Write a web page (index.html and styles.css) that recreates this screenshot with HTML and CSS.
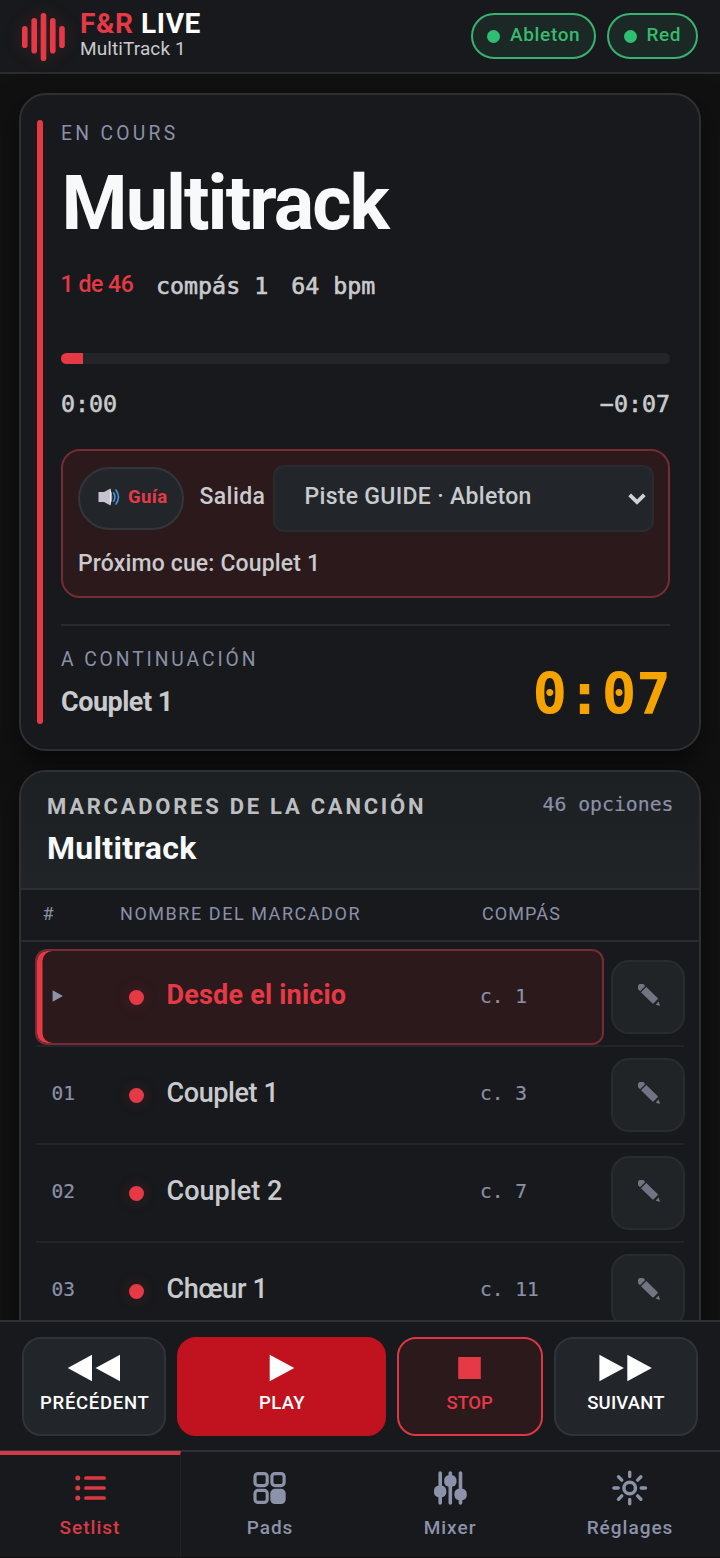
FILE: index.html
```html
<!DOCTYPE html>
<html lang="es">
<head>
<meta charset="utf-8">
<title>F&amp;R LIVE</title>
<link rel="stylesheet" href="styles.css">
</head>
<body>
<svg class="defs" width="0" height="0" aria-hidden="true">
  <symbol id="pencil" viewBox="0 0 22 22">
    <path d="M.8 6 A3.6 3.6 0 0 1 6 .7 L7.2 2 L2.1 7.2Z"/>
    <path d="M3 8.2 L8.3 2.9 L19.6 14 Q20.2 14.7 19.6 15.3 L15.6 19.2 Q15 19.8 14.3 19.2Z"/>
    <path d="M20.6 17.6 L21.9 20.9 Q22 21.9 21 21.7 L17.6 20.6Z"/>
  </symbol>
</svg>
<div class="app">
  <header class="topbar">
    <svg class="logo" width="44" height="50" viewBox="0 0 44 50">
      <rect x="0" y="14" width="5.6" height="22" rx="2.8"/>
      <rect x="9.4" y="6" width="5.6" height="35.5" rx="2.8"/>
      <rect x="18.7" y="1" width="5.6" height="48" rx="2.8"/>
      <rect x="28" y="6" width="5.6" height="35.5" rx="2.8"/>
      <rect x="37.2" y="14" width="5.6" height="22" rx="2.8"/>
    </svg>
    <div class="brand">
      <div class="brand-name"><span class="red">F&amp;R</span> LIVE</div>
      <div class="brand-sub">MultiTrack 1</div>
    </div>
    <div class="pills">
      <span class="pill pill-ableton"><i class="led"></i><span>Ableton</span></span>
      <span class="pill pill-net"><i class="led"></i><span>Red</span></span>
    </div>
  </header>

  <main class="content">
    <section class="card now">
      <div class="accent"></div>
      <div class="now-body">
        <div class="eyebrow">EN COURS</div>
        <h1 class="title">Multitrack</h1>
        <div class="meta"><span class="position">1 de 46</span><span class="mono">compás 1</span><span class="mono">64 bpm</span></div>
        <div class="progress"><div class="progress-fill"></div></div>
        <div class="times mono"><span>0:00</span><span>−0:07</span></div>
        <div class="guide">
          <div class="guide-row">
            <button class="guide-toggle">
              <svg width="22" height="18" viewBox="0 0 22 18">
                <path d="M.5 4 H6 L12.5 .4 V17.4 L6 14 H.5Z" fill="#c9c3cf"/>
                <path d="M12 .6 Q16 9 12 17.4Z" fill="#f2eff5"/>
                <path d="M13.3 6.2 Q15.6 9 13.3 11.8Z" fill="#8b8592"/>
                <path d="M15.6 4.8 Q18.3 9 15.6 13.2 M18 2 Q23 9 18 16" fill="none" stroke="#4a92dc" stroke-width="1.6" stroke-linecap="round"/>
              </svg>
              <span>Guía</span>
            </button>
            <span class="out-label">Salida</span>
            <div class="select">
              <span>Piste GUIDE · Ableton</span>
              <svg width="18" height="12" viewBox="0 0 18 12"><path d="M1.7 1.8 L9 9 L16.3 1.8" fill="none" stroke="#d0d1d6" stroke-width="3.8"/></svg>
            </div>
          </div>
          <div class="cue">Próximo cue: Couplet 1</div>
        </div>
        <div class="next">
          <div>
            <div class="eyebrow next-label">A CONTINUACIÓN</div>
            <div class="next-name">Couplet 1</div>
          </div>
          <div class="countdown">0:07</div>
        </div>
      </div>
    </section>

    <section class="card markers">
      <div class="markers-head">
        <div>
          <div class="markers-title">MARCADORES DE LA CANCIÓN</div>
          <div class="markers-song">Multitrack</div>
        </div>
        <div class="count">46 opciones</div>
      </div>
      <div class="cols"><span>#</span><span>NOMBRE DEL MARCADOR</span><span class="col-bar">COMPÁS</span></div>
      <div class="rows">
        <div class="row">
          <div class="marker active"><span class="num"><svg width="11" height="12" viewBox="0 0 11 12"><path d="M.6.2 L10.9 6 L.6 11.8Z"/></svg></span><i class="dot"></i><span class="name">Desde el inicio</span><span class="bar">c. 1</span></div>
          <button class="edit"><svg width="22" height="22"><use href="#pencil"/></svg></button>
        </div>
        <div class="row">
          <div class="marker"><span class="num">01</span><i class="dot"></i><span class="name">Couplet 1</span><span class="bar">c. 3</span></div>
          <button class="edit"><svg width="22" height="22"><use href="#pencil"/></svg></button>
        </div>
        <div class="row">
          <div class="marker"><span class="num">02</span><i class="dot"></i><span class="name wide">Couplet 2</span><span class="bar">c. 7</span></div>
          <button class="edit"><svg width="22" height="22"><use href="#pencil"/></svg></button>
        </div>
        <div class="row">
          <div class="marker"><span class="num">03</span><i class="dot"></i><span class="name">Chœur 1</span><span class="bar">c. 11</span></div>
          <button class="edit"><svg width="22" height="22"><use href="#pencil"/></svg></button>
        </div>
      </div>
    </section>
  </main>

  <div class="transport">
    <button class="ctl">
      <svg width="54" height="28" viewBox="0 0 54 28"><path d="M25 .7 V27.3 L.7 14Z M53 .7 V27.3 L28.5 14Z"/></svg>
      <span class="ls-prev">PRÉCÉDENT</span>
    </button>
    <button class="ctl play">
      <svg width="26" height="28" viewBox="0 0 26 28"><path d="M.7 .7 L25.3 14 L.7 27.3Z"/></svg>
      <span class="ls-play">PLAY</span>
    </button>
    <button class="ctl stop">
      <svg width="24" height="28" viewBox="0 0 24 28"><path d="M.2 3 H22.8 V25 H.2Z"/></svg>
      <span class="ls-stop">STOP</span>
    </button>
    <button class="ctl">
      <svg width="54" height="28" viewBox="0 0 54 28"><path d="M.4 .7 L24.9 14 L.4 27.3Z M28.3 .7 L52.8 14 L28.3 27.3Z"/></svg>
      <span class="ls-next">SUIVANT</span>
    </button>
  </div>

  <nav class="tabs">
    <a class="tab on">
      <svg width="36" height="36" viewBox="0 0 36 36" fill="none" stroke="currentColor" stroke-width="3.7" stroke-linecap="round"><path d="M13.9 8 H32.1 M13.9 18 H32.1 M13.9 28 H32.1"/><g fill="currentColor" stroke="none"><circle cx="5.8" cy="8" r="2.5"/><circle cx="5.8" cy="18" r="2.5"/><circle cx="5.8" cy="28" r="2.5"/></g></svg>
      <span>Setlist</span>
    </a>
    <a class="tab">
      <svg width="36" height="36" viewBox="0 0 36 36" fill="none" stroke="currentColor" stroke-width="3.2"><rect x="3" y="3.6" width="12.2" height="12" rx="3"/><rect x="19.9" y="3.6" width="12.2" height="12" rx="3"/><rect x="3" y="20.4" width="12.2" height="12" rx="3"/><rect x="19.9" y="20.4" width="12.2" height="12" rx="3" fill="currentColor"/></svg>
      <span>Pads</span>
    </a>
    <a class="tab">
      <svg width="36" height="36" viewBox="0 0 36 36" fill="currentColor" stroke="currentColor" stroke-width="3.6" stroke-linecap="round"><path d="M8.2 3 V33 M18.3 3 V33 M28.5 3 V33"/><g stroke="none"><rect x="2" y="15.8" width="12.3" height="11.4" rx="4.6"/><rect x="12.2" y="5.3" width="12.3" height="11.4" rx="4.6"/><rect x="22.4" y="18.8" width="12.3" height="11.4" rx="4.6"/></g></svg>
      <span>Mixer</span>
    </a>
    <a class="tab">
      <svg width="36" height="36" viewBox="0 0 36 36" fill="none" stroke="currentColor" stroke-width="3.4" stroke-linecap="round"><circle cx="17.7" cy="18" r="5.8"/><path d="M17.7 2.2 V6.5 M17.7 29.5 V33.8 M1.9 18 H6.2 M29.2 18 H33.5 M6.5 6.8 L9.8 10.1 M25.6 25.9 L28.9 29.2 M6.5 29.2 L9.8 25.9 M25.6 10.1 L28.9 6.8"/></svg>
      <span>Réglages</span>
    </a>
  </nav>
</div>
</body>
</html>
```

FILE: styles.css
```css
* { box-sizing: border-box; }
body {
  margin: 0;
  background: #0e0e0f;
  color: #c9cacd;
  font-family: Roboto, "Liberation Sans", sans-serif;
  font-weight: 500;
}
button { font: inherit; padding: 0; color: inherit; }
svg { display: block; flex: none; }
.defs { position: absolute; }
.red { color: #e63946; }
.mono, .count, .num, .bar, .countdown { font-family: "DejaVu Sans Mono", "Liberation Mono", monospace; font-weight: 400; }
.mono { -webkit-text-stroke: .6px currentColor; }
.count, .num, .bar { -webkit-text-stroke: .2px currentColor; }

.app { width: 720px; height: 1558px; display: flex; flex-direction: column; overflow: hidden; }

/* Top bar */
.topbar {
  flex: none;
  height: 74px;
  display: flex;
  align-items: flex-start;
  padding: 12px 22px 0;
  background: #17191c;
  border-bottom: 2px solid #2b2c2e;
}
.logo { fill: #e63946; filter: drop-shadow(0 0 9px rgba(230, 57, 70, .2)); }
.brand { margin-left: 14px; }
.brand-name { height: 24px; font-size: 28px; line-height: 24px; font-weight: 700; letter-spacing: .6px; color: #fff; }
.brand-sub { height: 24px; font-size: 19px; line-height: 25px; font-weight: 400; letter-spacing: .1px; color: #c9cacd; }
.pills { display: flex; gap: 11px; margin: 1px 0 0 auto; }
.pill {
  height: 46px;
  display: flex;
  align-items: center;
  gap: 10px;
  padding-left: 14.5px;
  border: 2px solid #38b26f;
  border-radius: 23px;
  background: #1b2825;
  color: #37ba6d;
  font-size: 19px;
  line-height: 42px;
}
.pill span { height: 44px; }
.pill-ableton { width: 125.5px; letter-spacing: .65px; }
.pill-net { width: 91px; letter-spacing: .6px; }
.led { width: 13px; height: 13px; border-radius: 50%; background: #2fbf71; }

/* Content */
.content {
  flex: none;
  height: 1246px;
  overflow: hidden;
  padding: 19px 19px 0;
  display: flex;
  flex-direction: column;
  gap: 19px;
  background: #111112;
}
.card {
  flex: none;
  border: 2px solid #2f3033;
  border-radius: 27px;
  background: #17191c;
  box-shadow: 0 12px 30px rgba(0, 0, 0, .5);
}
.now { height: 658px; display: flex; padding: 25px 29px 25px 16px; }
.accent { flex: none; width: 5.5px; border-radius: 3px; background: #e63946; }
.now-body { flex: 1; margin-left: 18.5px; }
.eyebrow { font-size: 19.3px; line-height: 27px; height: 26px; font-weight: 400; letter-spacing: 3.3px; color: #8b90a8; }
.title { margin: 17px 0 0 .5px; font-size: 75.5px; line-height: 80px; font-weight: 700; letter-spacing: -1.95px; color: #f8f9fb; }
.meta { margin-top: 27px; height: 31px; display: flex; align-items: flex-start; gap: 23px; font-size: 23.3px; line-height: 31px; white-space: nowrap; }
.position { width: 72.5px; font-size: 23px; line-height: 30px; color: #e63946; letter-spacing: -.45px; margin-left: -.5px; }
.progress { margin-top: 52px; height: 11px; border-radius: 6px; background: #232528; overflow: hidden; }
.progress-fill { width: 22px; height: 100%; background: #e63946; }
.times { margin-top: 26px; display: flex; justify-content: space-between; font-size: 23.3px; line-height: 28px; }

.guide { margin-top: 31px; height: 149px; padding: 14px 14px 0 15px; border: 2px solid #762b35; border-radius: 19px; background: #2b191c; }
.guide-row { height: 67px; display: flex; align-items: center; }
.guide-toggle {
  width: 106px;
  height: 63px;
  display: flex;
  align-items: center;
  gap: 8.5px;
  padding: 0 0 4px 17.5px;
  border: 2px solid #32363b;
  border-radius: 32px;
  background: #22262a;
  color: #e63946;
  font-size: 18.5px;
  font-weight: 700;
  letter-spacing: .4px;
}
.out-label { width: 89px; padding-left: 15.5px; font-size: 23px; line-height: 30px; height: 33px; letter-spacing: .4px; }
.select {
  flex: 1;
  height: 67px;
  display: flex;
  align-items: center;
  justify-content: space-between;
  padding: 0 6px 0 29.5px;
  border: 2px solid #292b30;
  border-radius: 11px;
  background: #22262a;
  font-size: 23px;
  line-height: 30px;
  letter-spacing: .3px;
}
.select span { height: 33px; }
.cue { margin-top: 18px; font-size: 23px; line-height: 28px; letter-spacing: .15px; }

.next { margin-top: 26px; height: 100px; padding-top: 20px; border-top: 2px solid #292a2d; display: flex; justify-content: space-between; }
.next-label { letter-spacing: 2.9px; }
.next-name { margin-top: 14px; font-size: 27px; line-height: 32px; font-weight: 700; letter-spacing: -.5px; }
.countdown { margin-top: 19px; font-size: 57.5px; line-height: 60px; font-weight: 700; color: #f5a300; margin-right: -1px; }

/* Marker list */
.markers { height: 640px; overflow: hidden; }
.markers-head { height: 118px; display: flex; justify-content: space-between; padding: 20px 25.5px 0 26px; background: linear-gradient(#1d2022, #202426); border-bottom: 2px solid #2c2e31; }
.markers-title { font-size: 22px; line-height: 30px; height: 28px; font-weight: 700; letter-spacing: 2.75px; color: #bcbec1; }
.markers-song { margin-top: 9px; font-size: 32px; line-height: 38px; font-weight: 700; letter-spacing: .3px; color: #f8f9fb; }
.count { font-size: 19.8px; line-height: 25px; color: #8b90a8; }
.cols { height: 52px; display: grid; grid-template-columns: 77.5px 362px 1fr; padding-left: 21.5px; border-bottom: 2px solid #292b2e; font-size: 18px; line-height: 48px; font-weight: 400; letter-spacing: 1.55px; color: #8b90a8; }
.col-bar { letter-spacing: 1.1px; }
.rows { padding: 7px 15px 0 15px; }
.row { height: 98px; display: grid; grid-template-columns: 568.5px 74px; gap: 7.5px; align-items: center; border-bottom: 2px solid #222427; }
.row > * { margin-left: -1px; }
.marker {
  height: 96px;
  display: grid;
  grid-template-columns: 77.5px 37.5px 313.5px 1fr;
  align-items: center;
  padding-left: 14.5px;
  border: 2px solid transparent;
  border-radius: 12px;
}
.marker.active { background: #2b191c; border-color: #762b35; box-shadow: inset 5.5px 0 0 #e63946; }
.row .active { width: 568.5px; }
.num, .bar { font-size: 19.5px; line-height: 24px; height: 27px; color: #8b90a8; }
.num svg { margin-top: 6px; fill: #8b94aa; }
.dot { width: 15px; height: 15px; border-radius: 50%; background: #e63946; box-shadow: 0 0 15px rgba(230, 57, 70, .22); }
.name { font-size: 27px; line-height: 33px; height: 37px; letter-spacing: -.4px; white-space: nowrap; }
.name.wide { letter-spacing: .05px; }
.active .name { color: #e63946; font-weight: 700; letter-spacing: .2px; }
.active .bar { height: 25px; }
.edit { width: 74px; height: 74px; display: flex; align-items: center; justify-content: center; border: 2px solid #292c2f; border-radius: 18px; background: #202426; padding: 0 0 4.5px 1px; }
.edit svg { fill: #717583; }

/* Transport */
.transport {
  flex: none;
  height: 130px;
  display: grid;
  grid-template-columns: 144px 209px 146px 144px;
  gap: 11px;
  padding: 15px 22px 14px;
  background: #17191c;
  border-top: 2px solid #2f3135;
}
.ctl {
  height: 99px;
  display: flex;
  flex-direction: column;
  align-items: center;
  gap: 9px;
  padding-top: 15px;
  border: 2px solid #303338;
  border-radius: 19px;
  background: #22262a;
  color: #fff;
  font-size: 18.5px;
  line-height: 25px;
}
.ctl svg { fill: currentColor; }
.play { background: #c1121f; border-color: #c1121f; }
.stop { background: #2b191c; border-color: #dd3744; color: #e63946; }
.ls-prev { letter-spacing: .7px; padding-left: 1.5px; }
.ls-play { letter-spacing: .4px; padding-left: 1px; }
.ls-stop { letter-spacing: -.15px; padding-right: 1px; }
.ls-next { letter-spacing: .2px; }

/* Tabs */
.tabs { flex: none; height: 107px; display: grid; grid-template-columns: repeat(4, 180px); background: #17191c; border-top: 2px solid #303136; }
.tab { display: flex; flex-direction: column; align-items: center; padding-top: 18px; color: #8b92a9; font-size: 19px; line-height: 25px; letter-spacing: 1px; }
.tab span { margin-top: 9px; }
.tab.on { margin-top: -1px; margin-right: -1px; padding-top: 15px; border-top: 4px solid #d33a47; border-right: 1px solid #202226; color: #dc3945; }
```
